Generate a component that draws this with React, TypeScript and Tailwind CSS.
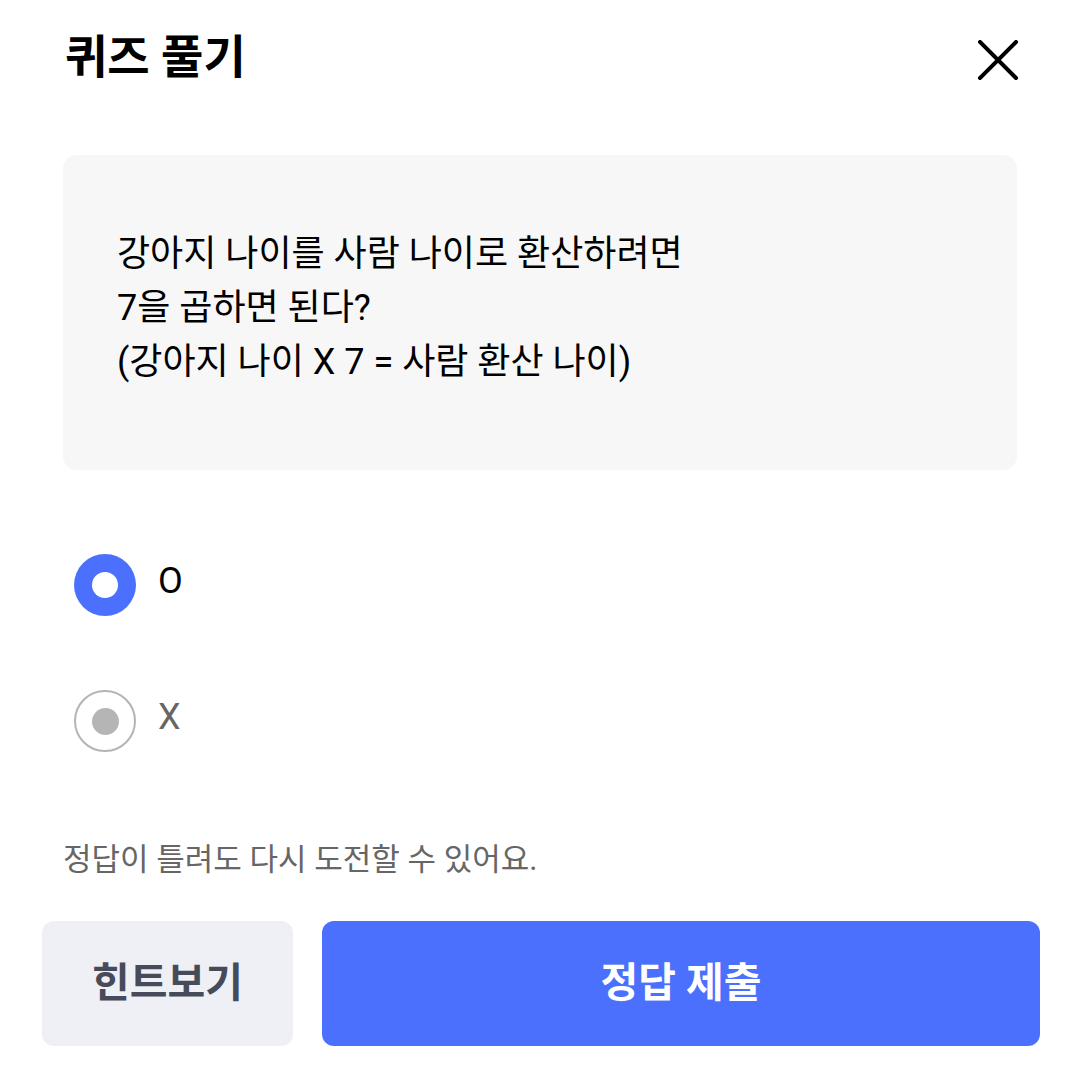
import React from "react";

export default function App() {
  const font = { fontFamily: 'Roboto, "Noto Sans CJK KR", sans-serif' };
  return (
    <div className="w-[1080px] h-[1086px] bg-white flex flex-col" style={font}>
      <div className="flex items-center justify-between pl-[65px] pr-[62px] pt-[34px] h-[80px]">
        <h1 className="text-[46px] leading-none font-semibold text-black">퀴즈 풀기</h1>
        <svg width="40" height="40" viewBox="0 0 40 40" className="mt-[6px]">
          <path d="M2 2 L38 38 M38 2 L2 38" stroke="#000" strokeWidth="4" strokeLinecap="square" />
        </svg>
      </div>
      <div className="mx-[63px] mt-[75px] h-[315px] rounded-[14px] bg-[#f7f7f7] flex items-center pl-[54px] pb-[10px]">
        <p className="text-[36px] leading-[54px] font-normal text-black">
          강아지 나이를 사람 나이로 환산하려면
          <br />
          7을 곱하면 된다?
          <br />
          (강아지 나이 X 7 = 사람 환산 나이)
        </p>
      </div>
      <div className="flex flex-col mt-[84px] pl-[74px] gap-[74px]">
        <div className="flex items-center gap-[22px]">
          <div className="w-[62px] h-[62px] rounded-full bg-[#4a70fd] flex items-center justify-center">
            <div className="w-[26px] h-[26px] rounded-full bg-white" />
          </div>
          <span className="text-[36px] leading-none text-black -mt-[8px]">O</span>
        </div>
        <div className="flex items-center gap-[22px]">
          <div className="w-[62px] h-[62px] rounded-full border-2 border-[#b4b4b4] flex items-center justify-center">
            <div className="w-[27px] h-[27px] rounded-full bg-[#b5b5b5]" />
          </div>
          <span className="text-[36px] leading-none text-[#666666] -mt-[8px]">X</span>
        </div>
      </div>
      <p className="mt-[92px] pl-[63px] text-[31px] leading-none text-[#666666]">정답이 틀려도 다시 도전할 수 있어요.</p>
      <div className="flex gap-[29px] pl-[42px] pr-[40px] mt-[46px]">
        <button className="w-[251px] h-[125px] rounded-[12px] bg-[#eef0f5] text-[#474b59] text-[41px] font-semibold">힌트보기</button>
        <button className="flex-1 h-[125px] rounded-[12px] bg-[#4a70fd] text-white text-[41px] font-semibold">정답 제출</button>
      </div>
    </div>
  );
}
